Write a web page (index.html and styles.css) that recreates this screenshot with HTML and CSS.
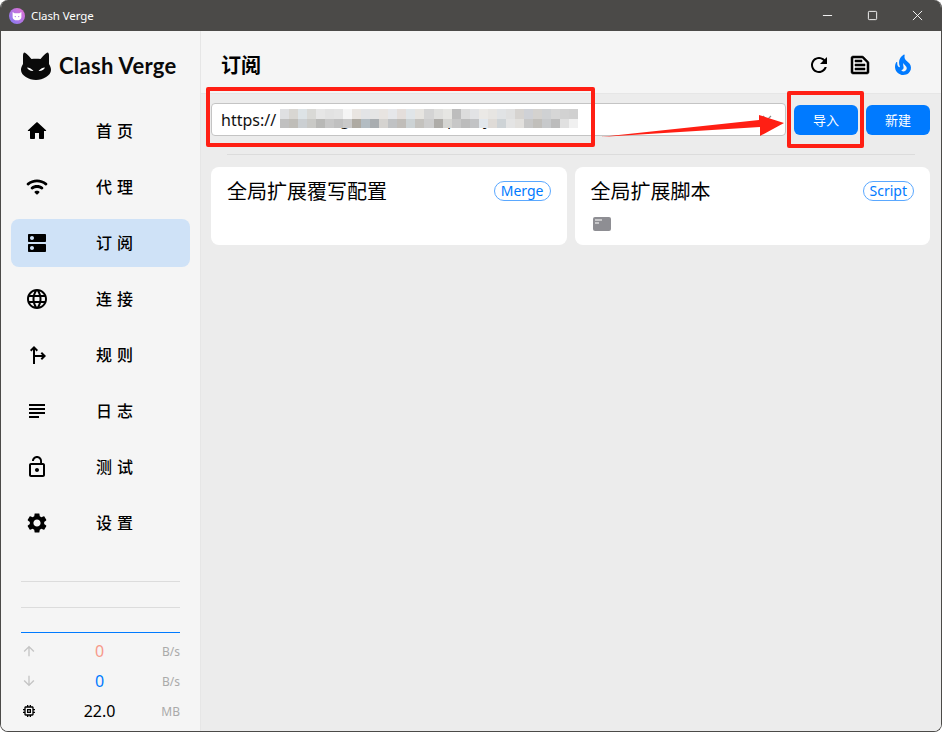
FILE: index.html
```html
<!DOCTYPE html>
<html lang="zh">
<head>
<meta charset="utf-8">
<title>Clash Verge</title>
<link rel="stylesheet" href="styles.css">
</head>
<body>
<div class="window">
  <header class="titlebar">
    <svg class="app-icon" viewBox="0 0 16 16"><defs><linearGradient id="ag" x1="0" y1="1" x2="1" y2="0"><stop offset="0" stop-color="#7f7bf5"/><stop offset="1" stop-color="#e86fd0"/></linearGradient></defs><circle cx="8" cy="8" r="8" fill="url(#ag)"/><path d="M3.600 4l2 1.300h4.800L12.400 4v5.200c0 1.900-2 3.100-4.400 3.100S3.600 11.100 3.600 9.200z" fill="#fff"/><circle cx="6.300" cy="8.600" r=".7" fill="#b27ae6"/><circle cx="9.700" cy="8.600" r=".7" fill="#b27ae6"/></svg>
    <span class="app-name">Clash Verge</span>
    <div class="win-controls">
      <svg class="win-btn" viewBox="0 0 12 12"><path d="M1 6h10" stroke="#fff" fill="none"/></svg>
      <svg class="win-btn" viewBox="0 0 12 12"><rect x="1.500" y="1.500" width="9" height="9" rx="1" stroke="#fff" fill="none"/></svg>
      <svg class="win-btn" viewBox="0 0 12 12"><path d="M1 1l10 10M11 1L1 11" stroke="#fff" fill="none"/></svg>
    </div>
  </header>
  <div class="app">
    <aside class="sidebar">
      <div class="logo">
        <svg class="logo-cat" viewBox="0 0 30 28"><path d="M3.500 .5C4.500 .5 9 5 10.500 7 13 6.500 17 6.500 19.500 7 21 5 25.500 .5 26.500 .5 27.500 .5 28 2 28 4L28 12C29.500 14.500 30 16 30 18 30 23.500 22 28 15 28 8 28 0 23.500 0 18 0 16 .5 14.500 2 12L2 4C2 2 2.500 .5 3.500 .5z" fill="#0a0a0a"/><path d="M6 15.500c2.500.2 5 1.500 6.500 3.500-2.800.3-5.500-1-6.500-3.500zM24 15.500c-2.500.2-5 1.500-6.500 3.500 2.800.3 5.500-1 6.500-3.500z" fill="#fff"/></svg>
        <span class="logo-text">Clash Verge</span>
      </div>
      <nav class="nav">
        <a class="nav-item"><svg class="nav-icon" viewBox="0 0 24 24"><path d="M10 19v-5h4v5c0 .55.45 1 1 1h3c.55 0 1-.45 1-1v-7h1.700c.46 0 .68-.57.33-.87L12.670 3.600c-.38-.34-.96-.34-1.340 0l-8.360 7.530c-.34.3-.13.87.33.87H5v7c0 .55.45 1 1 1h3c.55 0 1-.45 1-1z"/></svg><span class="nav-label">首页</span></a>
        <a class="nav-item"><svg class="nav-icon" viewBox="0 0 24 24"><path d="M2.060 10.060c.51.51 1.320.56 1.870.1 4.670-3.840 11.450-3.840 16.130-.01.56.46 1.380.42 1.890-.09.59-.59.55-1.570-.1-2.100-5.710-4.670-13.970-4.670-19.690 0-.65.52-.7 1.500-.1 2.100zm7.760 7.760 1.470 1.470c.39.39 1.020.39 1.410 0l1.470-1.470c.47-.47.37-1.270-.23-1.580-1.220-.63-2.680-.63-3.910 0-.57.31-.68 1.110-.21 1.580zm-3.730-3.730c.49.49 1.260.54 1.830.13 2.440-1.730 5.720-1.730 8.160 0 .57.4 1.340.36 1.830-.13l.01-.01c.6-.6.56-1.620-.13-2.110-3.440-2.490-8.130-2.490-11.580 0-.69.5-.73 1.510-.12 2.120z"/></svg><span class="nav-label">代理</span></a>
        <a class="nav-item active"><svg class="nav-icon" viewBox="0 0 24 24"><path d="M20 13H4c-.55 0-1 .45-1 1v6c0 .55.45 1 1 1h16c.55 0 1-.45 1-1v-6c0-.55-.45-1-1-1zM7 19c-1.100 0-2-.9-2-2s.9-2 2-2 2 .9 2 2-.9 2-2 2zM20 3H4c-.55 0-1 .45-1 1v6c0 .55.45 1 1 1h16c.55 0 1-.45 1-1V4c0-.55-.45-1-1-1zM7 9c-1.100 0-2-.9-2-2s.9-2 2-2 2 .9 2 2-.9 2-2 2z"/></svg><span class="nav-label">订阅</span></a>
        <a class="nav-item"><svg class="nav-icon" viewBox="0 0 24 24"><path d="M11.990 2C6.470 2 2 6.480 2 12s4.470 10 9.990 10C17.520 22 22 17.520 22 12S17.520 2 11.990 2zm6.930 6h-2.950c-.32-1.250-.78-2.450-1.380-3.560 1.840.63 3.370 1.910 4.330 3.560zM12 4.040c.83 1.200 1.480 2.530 1.910 3.960h-3.820c.43-1.430 1.080-2.760 1.910-3.960zM4.260 14C4.100 13.360 4 12.690 4 12s.1-1.360.26-2h3.380c-.08.66-.14 1.320-.14 2 0 .68.06 1.340.14 2H4.260zm.82 2h2.950c.32 1.250.78 2.450 1.380 3.560-1.840-.63-3.370-1.900-4.330-3.560zm2.950-8H5.080c.96-1.660 2.490-2.930 4.330-3.560C8.810 5.550 8.350 6.750 8.030 8zM12 19.960c-.83-1.200-1.480-2.530-1.910-3.960h3.820c-.43 1.430-1.080 2.760-1.910 3.960zM14.340 14H9.660c-.09-.66-.16-1.320-.16-2 0-.68.07-1.350.16-2h4.680c.09.65.16 1.320.16 2 0 .68-.07 1.340-.16 2zm.25 5.560c.6-1.110 1.060-2.310 1.380-3.560h2.950c-.96 1.650-2.490 2.930-4.330 3.560zM16.360 14c.08-.66.14-1.320.14-2 0-.68-.06-1.340-.14-2h3.380c.16.64.26 1.310.26 2s-.1 1.360-.26 2h-3.380z"/></svg><span class="nav-label">连接</span></a>
        <a class="nav-item"><svg class="nav-icon" viewBox="0 0 24 24"><path d="M9 3 5 7l1.410 1.410L8 6.830V21h2v-7h7.170l-1.580 1.590L17 17l4-4-4-4-1.410 1.410L17.170 12H10V6.830l1.590 1.580L13 7z"/></svg><span class="nav-label">规则</span></a>
        <a class="nav-item"><svg class="nav-icon" viewBox="0 0 24 24"><path d="M14 17H4v2h10v-2zm6-8H4v2h16V9zM4 15h16v-2H4v2zM4 5v2h16V5H4z"/></svg><span class="nav-label">日志</span></a>
        <a class="nav-item"><svg class="nav-icon" viewBox="0 0 24 24"><path d="M12 17c1.100 0 2-.9 2-2s-.9-2-2-2-2 .9-2 2 .9 2 2 2zm6-9h-1V6c0-2.760-2.240-5-5-5S7 3.240 7 6h1.900c0-1.710 1.390-3.100 3.100-3.100 1.710 0 3.100 1.390 3.100 3.100v2H6c-1.100 0-2 .9-2 2v10c0 1.100.9 2 2 2h12c1.100 0 2-.9 2-2V10c0-1.100-.9-2-2-2zm0 12H6V10h12v10z"/></svg><span class="nav-label">测试</span></a>
        <a class="nav-item"><svg class="nav-icon" viewBox="0 0 24 24"><path d="M19.140 12.940c.04-.3.06-.61.06-.94 0-.32-.02-.64-.07-.94l2.030-1.580c.18-.14.23-.41.12-.61l-1.920-3.320c-.12-.22-.37-.29-.59-.22l-2.390.96c-.5-.38-1.030-.7-1.620-.94l-.36-2.540c-.04-.24-.24-.41-.48-.41h-3.840c-.24 0-.43.17-.47.41l-.36 2.540c-.59.24-1.130.57-1.620.94l-2.390-.96c-.22-.08-.47 0-.59.22L2.740 8.870c-.12.21-.08.47.12.61l2.030 1.580c-.05.3-.09.63-.09.94s.02.64.07.94l-2.030 1.580c-.18.14-.23.41-.12.61l1.920 3.320c.12.22.37.29.59.22l2.390-.96c.5.38 1.030.7 1.620.94l.36 2.540c.05.24.24.41.48.41h3.840c.24 0 .44-.17.47-.41l.36-2.540c.59-.24 1.130-.56 1.620-.94l2.390.96c.22.08.47 0 .59-.22l1.920-3.320c.12-.22.07-.47-.12-.61l-2.010-1.580zM12 15.600c-1.980 0-3.600-1.620-3.600-3.600s1.620-3.600 3.600-3.600 3.600 1.620 3.600 3.600-1.620 3.600-3.600 3.600z"/></svg><span class="nav-label">设置</span></a>
      </nav>
      <div class="traffic">
        <div class="chart"><div class="grid-line"></div><div class="grid-line"></div><div class="base-line"></div></div>
        <div class="stat"><svg class="stat-icon muted" viewBox="0 0 24 24"><path d="M4 12l1.410 1.410L11 7.830V20h2V7.830l5.580 5.590L20 12l-8-8-8 8z"/></svg><span class="stat-value up">0</span><span class="stat-unit">B/s</span></div>
        <div class="stat"><svg class="stat-icon muted" viewBox="0 0 24 24"><path d="M20 12l-1.410-1.410L13 16.170V4h-2v12.170l-5.580-5.590L4 12l8 8 8-8z"/></svg><span class="stat-value down">0</span><span class="stat-unit">B/s</span></div>
        <div class="stat"><svg class="stat-icon" viewBox="0 0 24 24"><path d="M15 9H9v6h6V9zm-2 4h-2v-2h2v2zm8-2V9h-2V7c0-1.100-.9-2-2-2h-2V3h-2v2h-2V3H9v2H7c-1.100 0-2 .9-2 2v2H3v2h2v2H3v2h2v2c0 1.100.9 2 2 2h2v2h2v-2h2v2h2v-2h2c1.100 0 2-.9 2-2v-2h2v-2h-2v-2h2zm-4 6H7V7h10v10z"/></svg><span class="stat-value">22.0</span><span class="stat-unit">MB</span></div>
      </div>
    </aside>
    <main class="main">
      <div class="page-head">
        <h1 class="page-title">订阅</h1>
        <div class="head-actions">
          <svg class="head-icon" viewBox="0 0 24 24"><path d="M17.650 6.350C16.200 4.900 14.210 4 12 4c-4.420 0-7.990 3.580-7.990 8s3.570 8 7.990 8c3.730 0 6.840-2.550 7.730-6h-2.080c-.82 2.330-3.040 4-5.650 4-3.310 0-6-2.690-6-6s2.690-6 6-6c1.660 0 3.140.69 4.220 1.780L13 11h7V4l-2.350 2.350z"/></svg>
          <svg class="head-icon doc" viewBox="0 0 24 24"><path d="M14.170 5 19 9.830V19H5V5h9.170m0-2H5c-1.100 0-2 .9-2 2v14c0 1.100.9 2 2 2h14c1.100 0 2-.9 2-2V9.830c0-.53-.21-1.040-.59-1.410l-4.830-4.830c-.37-.38-.88-.59-1.410-.59zM7 15h10v2H7v-2zm0-4h10v2H7v-2zm0-4h7v2H7V7z"/></svg>
          <svg class="head-icon fire" viewBox="0 0 24 24"><path d="M19.480 12.350c-1.570-4.080-7.160-4.300-5.810-10.230.1-.44-.37-.78-.75-.55C9.290 3.710 6.680 8 8.870 13.620c.18.46-.36.89-.75.59-1.810-1.370-2-3.340-1.840-4.750.06-.52-.62-.77-.91-.34C4.690 10.160 4 11.840 4 14.370c.38 5.600 5.110 7.320 6.810 7.540 2.430.31 5.060-.14 6.950-1.870 2.080-1.930 2.840-5.010 1.720-7.690zm-9.280 5.030c1.440-.35 2.180-1.390 2.380-2.310.33-1.430-.96-2.830-.09-5.090.33 1.870 3.270 3.040 3.270 5.080.08 2.530-2.660 4.700-5.560 2.320z"/></svg>
        </div>
      </div>
      <div class="import-row">
        <div class="url-field">
          <span class="url-text">https://</span>
          <span class="desc desc-g">g</span>
          <span class="desc desc-p">p</span>
          <span class="desc desc-y">y</span>
          <svg class="mosaic" viewBox="0 0 33 2" preserveAspectRatio="none" shape-rendering="crispEdges">
            <rect x="0" y="0" width="1" height="1" fill="#dfe0e2"/><rect x="1" y="0" width="1" height="1" fill="#d8d6d2"/><rect x="2" y="0" width="1" height="1" fill="#dde3e6"/><rect x="3" y="0" width="1" height="1" fill="#d9d9d6"/><rect x="4" y="0" width="1" height="1" fill="#e6e6e6"/><rect x="5" y="0" width="1" height="1" fill="#e2e2e2"/><rect x="6" y="0" width="1" height="1" fill="#e4e4e4"/><rect x="7" y="0" width="1" height="1" fill="#f5f5f5"/><rect x="8" y="0" width="1" height="1" fill="#e9e5e1"/><rect x="9" y="0" width="1" height="1" fill="#e3e4e6"/><rect x="10" y="0" width="1" height="1" fill="#e5e5e5"/><rect x="11" y="0" width="1" height="1" fill="#e8e4e1"/><rect x="12" y="0" width="1" height="1" fill="#e6e7ea"/><rect x="13" y="0" width="1" height="1" fill="#e4dedb"/><rect x="14" y="0" width="1" height="1" fill="#e0e5e8"/><rect x="15" y="0" width="1" height="1" fill="#e6e4e0"/><rect x="16" y="0" width="1" height="1" fill="#d4d4d4"/><rect x="17" y="0" width="1" height="1" fill="#dfdfdd"/><rect x="18" y="0" width="1" height="1" fill="#e6e6e3"/><rect x="19" y="0" width="1" height="1" fill="#bdbdbd"/><rect x="20" y="0" width="1" height="1" fill="#dcdcdc"/><rect x="21" y="0" width="1" height="1" fill="#e2e3e5"/><rect x="22" y="0" width="1" height="1" fill="#ebe9e6"/><rect x="23" y="0" width="1" height="1" fill="#e7e5e2"/><rect x="24" y="0" width="1" height="1" fill="#e1e3e5"/><rect x="25" y="0" width="1" height="1" fill="#e0e0e0"/><rect x="26" y="0" width="1" height="1" fill="#d6d3d0"/><rect x="27" y="0" width="1" height="1" fill="#cfd1d6"/><rect x="28" y="0" width="1" height="1" fill="#d4d2cf"/><rect x="29" y="0" width="1" height="1" fill="#cfd1d3"/><rect x="30" y="0" width="1" height="1" fill="#d6d6d6"/><rect x="31" y="0" width="1" height="1" fill="#d2d2d2"/><rect x="32" y="0" width="1" height="1" fill="#d0d0d0"/>
            <rect x="0" y="1" width="1" height="1" fill="#c0c0c0"/><rect x="1" y="1" width="1" height="1" fill="#bfbdb8"/><rect x="2" y="1" width="1" height="1" fill="#cbcfd2"/><rect x="3" y="1" width="1" height="1" fill="#c9c9c6"/><rect x="4" y="1" width="1" height="1" fill="#b8b8b6"/><rect x="5" y="1" width="1" height="1" fill="#c7c7c7"/><rect x="6" y="1" width="1" height="1" fill="#c0c0c0"/><rect x="7" y="1" width="1" height="1" fill="#c9c9c9"/><rect x="8" y="1" width="1" height="1" fill="#aeaaa2"/><rect x="9" y="1" width="1" height="1" fill="#b3bcc2"/><rect x="10" y="1" width="1" height="1" fill="#a9adb0"/><rect x="11" y="1" width="1" height="1" fill="#d5d3d0"/><rect x="12" y="1" width="1" height="1" fill="#c0c2c4"/><rect x="13" y="1" width="1" height="1" fill="#c0bdb9"/><rect x="14" y="1" width="1" height="1" fill="#ccd2d4"/><rect x="15" y="1" width="1" height="1" fill="#c4c2be"/><rect x="16" y="1" width="1" height="1" fill="#cdcdcd"/><rect x="17" y="1" width="1" height="1" fill="#aeaca8"/><rect x="18" y="1" width="1" height="1" fill="#d5d5d2"/><rect x="19" y="1" width="1" height="1" fill="#c7c7c7"/><rect x="20" y="1" width="1" height="1" fill="#bcbcbc"/><rect x="21" y="1" width="1" height="1" fill="#c2c3c5"/><rect x="22" y="1" width="1" height="1" fill="#e2e7ec"/><rect x="23" y="1" width="1" height="1" fill="#dfdbd7"/><rect x="24" y="1" width="1" height="1" fill="#ced3d6"/><rect x="25" y="1" width="1" height="1" fill="#e4e4e4"/><rect x="26" y="1" width="1" height="1" fill="#e2e0dd"/><rect x="27" y="1" width="1" height="1" fill="#c7c7c7"/><rect x="28" y="1" width="1" height="1" fill="#c1bfbb"/><rect x="29" y="1" width="1" height="1" fill="#c7c9cb"/><rect x="30" y="1" width="1" height="1" fill="#bcbcbc"/><rect x="31" y="1" width="1" height="1" fill="#e0e0e0"/><rect x="32" y="1" width="1" height="1" fill="#f0f0f0"/>
          </svg>
          <svg class="chevron" viewBox="0 0 10 6"><path d="M1 1l4 4 4-4" stroke="#8a8a8a" stroke-width="1.200" fill="none"/></svg>
        </div>
        <button class="btn">导入</button>
        <button class="btn">新建</button>
      </div>
      <div class="divider"></div>
      <div class="cards">
        <article class="card">
          <div class="card-top"><h2 class="card-title">全局扩展覆写配置</h2><span class="chip">Merge</span></div>
        </article>
        <article class="card">
          <div class="card-top"><h2 class="card-title">全局扩展脚本</h2><span class="chip">Script</span></div>
          <svg class="card-icon" viewBox="0 0 18 14"><rect width="18" height="14" rx="2" fill="#8e8e93"/><path d="M2 3h7M2 6h4" stroke="#fff" stroke-width="1.200"/></svg>
        </article>
      </div>
    </main>
  </div>
  <div class="mark mark-url"></div>
  <div class="mark mark-btn"></div>
  <svg class="mark-arrow" viewBox="0 0 200 40"><path d="M2 27 L161 10 L161 5 L186 13 L162 26 L162 17 Z" fill="#ff1f14"/></svg>
</div>
</body>
</html>
```
FILE: styles.css
```css
* { box-sizing: border-box; }
html, body { margin: 0; height: 100%; background: #fff; }
body { font-family: "Noto Sans", "Noto Sans CJK SC", sans-serif; color: #000; overflow: hidden; }

.window {
  position: relative;
  display: flex;
  flex-direction: column;
  height: 100vh;
  border: 1px solid #4b4a48;
  border-top: 0;
  border-radius: 8px;
  overflow: hidden;
}

.titlebar {
  flex: none;
  display: flex;
  align-items: center;
  height: 31px;
  padding-left: 8px;
  background: #4b4a48;
  color: #fff;
}
.app-icon { width: 16px; height: 16px; }
.app-name { margin-left: 6px; font-size: 11.5px; letter-spacing: -.1px; }
.win-controls { margin-left: auto; display: flex; align-items: center; gap: 34px; padding-right: 18px; }
.win-btn { width: 11px; height: 11px; }

.app { flex: 1; display: flex; min-height: 0; }

.sidebar {
  flex: none;
  width: 200px;
  display: flex;
  flex-direction: column;
  background: #f5f5f5;
  border-right: 1px solid #e6e6e6;
}
.logo { height: 76px; display: flex; align-items: center; padding: 0 0 6px 20px; }
.logo-cat { width: 30px; height: 28px; }
.logo-text { margin-left: 8px; font: 700 22px/1 "Lato", sans-serif; letter-spacing: .3px; color: #0a0a0a; }

.nav { display: flex; flex-direction: column; gap: 8px; padding: 0 10px; }
.nav-item { display: flex; align-items: center; height: 48px; border-radius: 8px; padding-left: 14px; }
.nav-item.active { background: #cfe2f7; }
.nav-icon { width: 24px; height: 24px; fill: #000; }
.nav-label { margin-left: 47px; padding-bottom: 2px; font: 500 16px/1 "Noto Sans CJK SC", sans-serif; letter-spacing: 5px; }

.traffic { margin-top: auto; padding: 0 20px 5px 20px; }
.chart { display: flex; flex-direction: column; }
.grid-line { height: 1px; background: #dcdcdc; margin-bottom: 25px; }
.grid-line + .grid-line { margin-bottom: 24px; }
.base-line { height: 1px; background: #007aff; margin-bottom: 3px; }
.stat { display: flex; align-items: center; height: 30px; }
.stat-icon { width: 16px; height: 16px; fill: #000; }
.stat-icon.muted { fill: #c4c4c4; }
.stat-value { flex: 1; text-align: center; font-size: 16px; margin-left: 8px; }
.stat-value.up { color: #f79a8b; }
.stat-value.down { color: #007aff; }
.stat-unit { width: 26px; text-align: right; font-size: 12px; color: #aaa; }

.main { flex: 1; min-width: 0; display: flex; flex-direction: column; background: #ececec; }
.page-head {
  flex: none;
  display: flex;
  align-items: center;
  height: 63px;
  padding: 5px 26px 0 20px;
  background: #f5f5f5;
  border-bottom: 1px solid #e6e6e6;
}
.page-title { margin: 0; font: 700 20px/1 "Noto Sans CJK SC", sans-serif; }
.head-actions { margin-left: auto; display: flex; gap: 17px; }
.head-icon { width: 24px; height: 24px; fill: #000; }
.head-icon.doc { stroke: #000; stroke-width: .5; }
.head-icon.fire { fill: #007aff; margin-left: 2px; }

.import-row { display: flex; align-items: center; gap: 8px; padding: 9px 11px 0 10px; }
.url-field {
  position: relative;
  flex: 1;
  height: 33px;
  display: flex;
  align-items: center;
  padding-left: 9px;
  background: #fff;
  border: 1px solid #c4c4c4;
  border-radius: 4px;
}
.url-text { font-size: 16px; color: #111; }
.desc { position: absolute; top: 2px; font-size: 16px; line-height: 26px; color: #111; }
.desc-g { left: 128px; }
.desc-p { left: 235px; }
.desc-y { left: 271px; }
.mosaic { position: absolute; left: 68px; top: 5px; width: 298px; height: 19px; }
.chevron { position: absolute; right: 13px; top: 11px; width: 10px; height: 6px; }
.btn {
  flex: none;
  width: 64px;
  height: 30px;
  border: 0;
  border-radius: 6px;
  background: #007aff;
  color: #fff;
  font: 400 13px/1 "Noto Sans CJK SC", sans-serif;
}

.divider { height: 1px; background: #dcdcdc; margin: 18px 26px 12px 26px; }

.cards { display: grid; grid-template-columns: 1fr 1fr; gap: 8px; padding: 0 11px 0 10px; }
.card { height: 78px; background: #fff; border-radius: 8px; padding: 10px 16px; }
.card-top { display: flex; align-items: center; justify-content: space-between; }
.card-title { margin: 0; font: 400 20px/28px "Noto Sans CJK SC", sans-serif; }
.chip {
  height: 20px;
  padding: 0 6px;
  border: 1px solid #5aa8ff;
  border-radius: 10px;
  color: #007aff;
  font-size: 14px;
  line-height: 18px;
}
.card-icon { display: block; width: 18px; height: 14px; margin: 12px 0 0 2px; }

.mark { position: absolute; border: 4px solid #ff1f14; border-radius: 2px; }
.mark-url { left: 205px; top: 87px; width: 389px; height: 60px; }
.mark-btn { left: 786px; top: 91px; width: 77px; height: 57px; }
.mark-arrow { position: absolute; left: 597px; top: 110px; width: 200px; height: 40px; }
```
